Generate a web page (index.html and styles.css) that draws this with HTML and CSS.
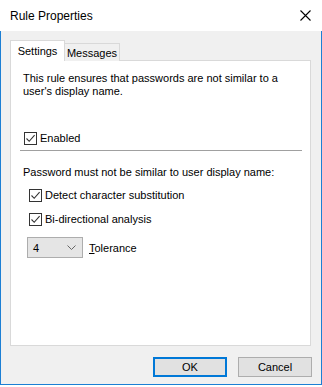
FILE: index.html
```html
<!DOCTYPE html>
<html>
<head>
<meta charset="utf-8">
<link rel="stylesheet" href="styles.css">
</head>
<body>
<div class="window">
  <div class="titlebar">
    <span class="title">Rule Properties</span>
    <svg class="close" width="11" height="11" viewBox="0 0 11 11"><path d="M0.5 0.5 L10.5 10.5 M10.5 0.5 L0.5 10.5" stroke="#000" stroke-width="1.1" fill="none"/></svg>
  </div>
  <div class="body">
    <div class="tabs">
      <div class="tab selected">Settings</div>
      <div class="tab">Messages</div>
    </div>
    <div class="panel">
      <p class="desc">This rule ensures that passwords are not similar to a user's display name.</p>
      <label class="check enabled"><span class="box"><svg width="11" height="11" viewBox="0 0 11 11"><path d="M1.5 5.5 L4.2 8.3 L9.6 2.2" stroke="#333" stroke-width="1.1" fill="none"/></svg></span>Enabled</label>
      <div class="sep"></div>
      <p class="label">Password must not be similar to user display name:</p>
      <label class="check sub first"><span class="box"><svg width="11" height="11" viewBox="0 0 11 11"><path d="M1.5 5.5 L4.2 8.3 L9.6 2.2" stroke="#333" stroke-width="1.1" fill="none"/></svg></span>Detect character substitution</label>
      <label class="check sub"><span class="box"><svg width="11" height="11" viewBox="0 0 11 11"><path d="M1.5 5.5 L4.2 8.3 L9.6 2.2" stroke="#333" stroke-width="1.1" fill="none"/></svg></span>Bi-directional analysis</label>
      <div class="tolerance">
        <div class="combo"><span>4</span><svg width="9" height="5" viewBox="0 0 9 5"><path d="M0.5 0.5 L4.5 4.5 L8.5 0.5" stroke="#666" stroke-width="1" fill="none"/></svg></div>
        <span class="tol-label"><u>T</u>olerance</span>
      </div>
    </div>
    <div class="buttons">
      <button class="btn default">OK</button>
      <button class="btn">Cancel</button>
    </div>
  </div>
</div>
</body>
</html>
```
FILE: styles.css
```css
* { box-sizing: border-box; }
html, body { margin: 0; padding: 0; background: #ffffff; }
body {
  font-family: "Liberation Sans", Arial, sans-serif;
  font-size: 11px;
  color: #000;
}
.window {
  width: 322px;
  height: 385px;
  display: flex;
  flex-direction: column;
}
.titlebar {
  height: 31px;
  background: #fff;
  display: flex;
  align-items: center;
  justify-content: space-between;
  padding: 0 11px 0 10px;
}
.title {
  font-size: 12px;
  padding-top: 1px;
}
.body {
  flex: 1;
  background: #f0f0f0;
  border: 1px solid #1c7fd4;
  border-top: none;
  padding: 9px 10px 0 9px;
  display: flex;
  flex-direction: column;
}
.tabs {
  display: flex;
  align-items: flex-end;
  height: 21px;
  margin-bottom: -1px;
  position: relative;
  z-index: 1;
}
.tab {
  height: 18px;
  border: 1px solid #d9d9d9;
  border-bottom: none;
  background: #f0f0f0;
  padding: 3px 0 0;
  text-align: center;
  width: 56px;
  margin-left: -1px;
}
.tab.selected {
  height: 21px;
  width: 55px;
  margin-left: 0;
  background: #fff;
  padding-top: 4px;
  position: relative;
  z-index: 2;
}
.panel {
  height: 286px;
  background: #fff;
  border: 1px solid #d9d9d9;
  padding: 0 8px 0 12px;
  display: flex;
  flex-direction: column;
  align-items: flex-start;
}
.desc {
  margin: 11px 0 0;
  line-height: 13px;
  width: 265px;
}
.check {
  display: flex;
  align-items: center;
  height: 13px;
  line-height: 13px;
}
.box {
  width: 13px;
  height: 13px;
  border: 1px solid #333;
  background: #fff;
  margin-right: 3px;
  display: flex;
  align-items: center;
  justify-content: center;
}
.box svg { display: block; }
.enabled { margin-top: 34px; margin-left: 1px; }
.sep {
  align-self: stretch;
  height: 1px;
  background: #a0a0a0;
  margin: 5px 0 0 -3px;
}
.label {
  margin: 15px 0 0;
  line-height: 13px;
}
.sub { margin-left: 6px; margin-top: 11px; }
.sub.first { margin-top: 10px; }
.tolerance {
  display: flex;
  align-items: center;
  margin: 11px 0 0 4px;
}
.combo {
  width: 56px;
  height: 21px;
  background: #e5e5e5;
  border: 1px solid #adadad;
  display: flex;
  align-items: center;
  justify-content: space-between;
  padding: 0 6px 0 5px;
}
.tol-label { margin-left: 6px; }
.buttons {
  display: flex;
  justify-content: flex-end;
  gap: 11px;
  margin: 11px -1px 0 0;
}
.btn {
  width: 74px;
  height: 20px;
  background: #e1e1e1;
  border: 1px solid #adadad;
  font-family: "Liberation Sans", Arial, sans-serif;
  font-size: 11px;
  color: #000;
  padding: 0;
  margin: 0;
}
.btn.default { border: 2px solid #0078d7; }
```
